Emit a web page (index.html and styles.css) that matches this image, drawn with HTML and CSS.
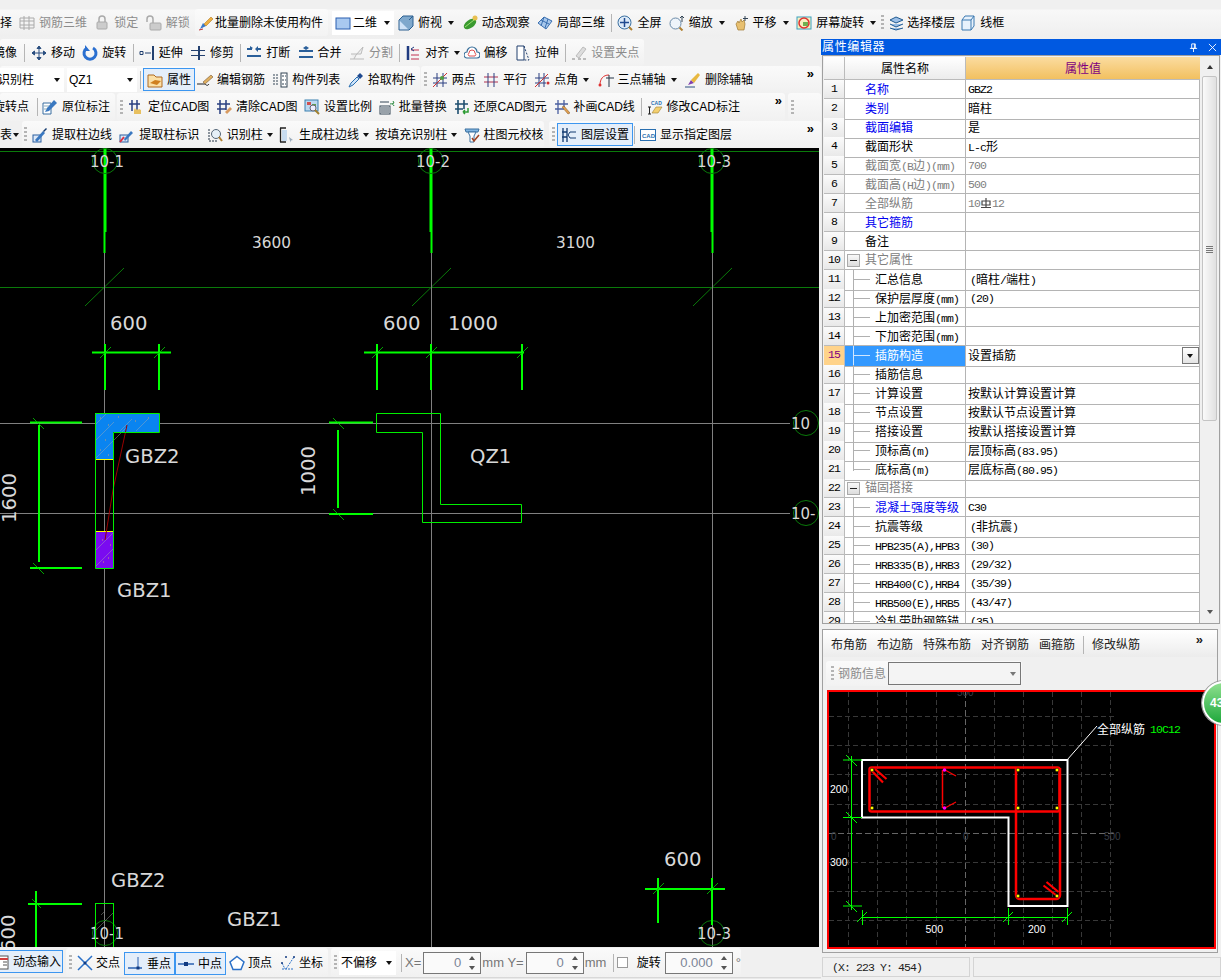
FILE: index.html
```html
<!DOCTYPE html>
<html lang="zh">
<head>
<meta charset="utf-8">
<title>属性编辑器</title>
<link rel="stylesheet" href="styles.css">
</head>
<body>
<div class="app">
  <div class="top">
    <div class="cut" >择</div>
    <div class="it off"><svg class="ic" viewBox="0 0 16 16"><path d="M1 3h14v10H1zM1 6h14M1 10h14M5 1v14M10 1v14" fill="none" stroke="#aaa"/></svg>钢筋三维</div>
    <div class="it off"><svg class="ic" viewBox="0 0 16 16"><rect x="3" y="7" width="10" height="7" rx="1" fill="#ccc" stroke="#aaa"/><path d="M5 7V4a3 3 0 0 1 6 0v3" fill="none" stroke="#aaa" stroke-width="1.5"/></svg>锁定</div>
    <div class="it off"><svg class="ic" viewBox="0 0 16 16"><rect x="4" y="8" width="11" height="7" rx="1" fill="#ccc" stroke="#aaa"/><path d="M1 7V4a3 3 0 0 1 6 0v4" fill="none" stroke="#aaa" stroke-width="1.5"/></svg>解锁</div>
    <div class="grp pill"><div class="it tight last"><svg class="ic" viewBox="0 0 16 16"><path d="M2 14l3-6 3 3z" fill="#3a78c8"/><path d="M6 9l7-7 2 2-7 7z" fill="#f0b040" stroke="#a06a10" stroke-width=".5"/><path d="M1 15l4-1" stroke="#c03030"/></svg>批量删除未使用构件</div></div>
    <div class="sel s2d"><svg class="ic" viewBox="0 0 16 16"><rect x="1" y="3" width="14" height="11" fill="#a9c9f0" stroke="#2a5fb0"/></svg><span class="lbl">二维</span><i class="ar"></i></div>
    <div class="it"><svg class="ic" viewBox="0 0 16 16"><path d="M1 5h10v10H1z" fill="#cfe2f6" stroke="#2a5f90"/><path d="M1 5l4-4h10v10l-4 4M11 5l4-4" fill="#7fa8cc" stroke="#2a5f90"/></svg>俯视<i class="ar"></i></div>
    <div class="it"><svg class="ic" viewBox="0 0 16 16"><ellipse cx="8" cy="9" rx="7" ry="4" transform="rotate(-35 8 9)" fill="#3a9a30"/><circle cx="13" cy="3" r="2.5" fill="#e8c050"/><path d="M3 12l9-7" stroke="#9adf70"/></svg>动态观察</div>
    <div class="it"><svg class="ic" viewBox="0 0 16 16"><path d="M1 8l6-6 8 4-6 8z" fill="#a8c8ec" stroke="#3a6fb0"/><path d="M4 5l8 4M7 2l-3 9M11 4l-3 9" stroke="#3a6fb0" fill="none"/></svg>局部三维</div>
    <i class="sep"></i>
    <div class="it"><svg class="ic" viewBox="0 0 16 16"><circle cx="7.5" cy="7.5" r="6.5" fill="#dceaf8" stroke="#3a6fa0"/><path d="M7.5 3v9M3 7.5h9" stroke="#204a90" stroke-width="1.5"/><path d="M12 12l3 3" stroke="#b08030" stroke-width="2"/></svg>全屏</div>
    <div class="it"><svg class="ic" viewBox="0 0 16 16"><circle cx="6.5" cy="8.5" r="5.5" fill="#eef4fa" stroke="#6a8aa8"/><path d="M10.500 12.500l3 3" stroke="#b08030" stroke-width="2"/><path d="M13 1v6M11 3l2-2 2 2" stroke="#345" fill="none"/></svg>缩放<i class="ar"></i></div>
    <div class="it"><svg class="ic" viewBox="0 0 16 16"><path d="M3 9l2-3 1 2 2-4 1 3 2-2 1 4-1 6H5z" fill="#e8c070" stroke="#a07a30" stroke-width=".7"/><path d="M12 1v5M10 3.500h5" stroke="#345"/></svg>平移<i class="ar"></i></div>
    <div class="it"><svg class="ic" viewBox="0 0 16 16"><rect x="1" y="2" width="14" height="12" fill="#f6f0c0" stroke="#3aa0c0"/><circle cx="8" cy="8" r="5" fill="none" stroke="#e03030" stroke-width="1.5"/><rect x="7" y="7" width="5" height="4" fill="#70b050"/></svg>屏幕旋转<i class="ar"></i></div>
    <i class="grip g-top"></i>
    <div class="it i-floor"><svg class="ic" viewBox="0 0 16 16"><path d="M1 5l6-3 7 3-7 3zM1 9l6 3 7-3M1 13l6 2 7-2" fill="#9cc0e8" stroke="#205a90"/></svg>选择楼层</div>
    <div class="it"><svg class="ic" viewBox="0 0 16 16"><path d="M2 5h9v10H2zM2 5l3-4h9v10l-3 4M11 5l3-4" fill="#e8f2fc" stroke="#3a78b0"/></svg>线框</div>
  </div>

  <div class="main">
    <div class="left">
      <div class="row r2">
        <div class="grp g-first">
          <span class="cut c7">镜像</span><i class="sep s7"></i>
          <div class="it"><svg class="ic" viewBox="0 0 16 16"><path d="M8 1v14M1 8h14M8 1L6 3.500h4zM8 15l-2-2.500h4zM1 8l2.500-2v4zM15 8l-2.500-2v4z" fill="#2a4f80" stroke="#2a4f80"/></svg>移动</div>
          <div class="it"><svg class="ic" viewBox="0 0 16 16"><path d="M5 3a6 6 0 1 0 6 0" fill="none" stroke="#2a6fd0" stroke-width="3"/><path d="M3 0v6h5z" fill="#2a6fd0"/></svg>旋转</div>
          <i class="sep"></i>
          <div class="it"><svg class="ic" viewBox="0 0 16 16"><path d="M1 6.500h3v3H1zM6 8h6" fill="none" stroke="#23406f"/><path d="M14 1v14" stroke="#23406f" stroke-width="2"/></svg>延伸</div>
          <div class="it"><svg class="ic" viewBox="0 0 16 16"><path d="M1 5.500h7M1 10.500h7M10 5.500h5M10 10.500h5" stroke="#23406f"/><path d="M9 1v14" stroke="#23406f" stroke-width="2"/></svg>修剪</div>
          <i class="sep"></i>
          <div class="it"><svg class="ic" viewBox="0 0 16 16"><path d="M1 4h5M10 4h5M1 11h14" stroke="#2a5f9a" stroke-width="2"/><path d="M7 3L4 1v4zM9 4l3-3v6z" fill="#2a5f9a"/></svg>打断</div>
          <div class="it"><svg class="ic" viewBox="0 0 16 16"><path d="M1 6h14M1 12h14" stroke="#2a5f9a" stroke-width="2"/><path d="M5 3l3 2V1zM11 3L8 5V1z" fill="#2a5f9a"/></svg>合并</div>
          <div class="it off"><svg class="ic" viewBox="0 0 16 16"><path d="M1 14h14M2 9h10l2-7-7 8-2 4" fill="#eee" stroke="#bbb"/></svg>分割</div>
          <i class="sep"></i>
          <div class="it"><svg class="ic" viewBox="0 0 16 16"><path d="M3 1v14" stroke="#1f3a80" stroke-width="2.500"/><path d="M6 5h8M6 10h8M6 14h8" stroke="#c03050"/><path d="M9 2L6 4l3 2" fill="none" stroke="#1f3a80"/></svg>对齐<i class="ar"></i></div>
          <div class="it"><svg class="ic" viewBox="0 0 16 16"><path d="M3 13a3 3 0 0 1 0-6 5 5 0 0 1 10 0 3 3 0 0 1 0 6z" fill="#fff" stroke="#3a6f9a" stroke-width="1.200"/><path d="M5 11a2 2 0 0 1 0-3 3 3 0 0 1 6 0 2 2 0 0 1 0 3z" fill="none" stroke="#e05050"/></svg>偏移</div>
          <div class="it"><svg class="ic" viewBox="0 0 16 16"><path d="M2 1h7v14H2z" fill="#fff" stroke="#23406f"/><path d="M9 1l5 14H9" fill="none" stroke="#23406f" stroke-dasharray="2 1.500"/></svg>拉伸</div>
          <i class="sep"></i>
          <div class="it off last"><svg class="ic" viewBox="0 0 16 16"><path d="M5 11l7-9 3 2-7 9z" fill="#ddd" stroke="#bbb"/><path d="M1 14h3M7 14h3M12 14h3" stroke="#bbb" stroke-width="2"/></svg>设置夹点</div>
        </div>
      </div>

      <div class="row r3">
        <div class="grp g-sel">
          <div class="sel s-a"><span class="lbl">识别柱</span><i class="ar"></i></div>
          <div class="sel s-b"><span class="lbl">QZ1</span><i class="ar"></i></div>
          <i class="sep"></i>
          <div class="box"><svg class="ic" viewBox="0 0 16 16"><path d="M1 3h6l2 2h6v10H1z" fill="#fbe0a8" stroke="#b06a20"/><path d="M3 11l5-3 6 1-4 4z" fill="#d08020"/></svg>属性</div>
          <div class="it"><svg class="ic" viewBox="0 0 16 16"><path d="M0 12h7c2 0 3 3 5 0" fill="none" stroke="#222"/><path d="M6 10l8-7 2 2-8 7z" fill="#e0b060" stroke="#604020" stroke-width=".5"/></svg>编辑钢筋</div>
          <div class="it"><svg class="ic" viewBox="0 0 16 16"><rect x="9" y="1" width="6" height="14" fill="#fff" stroke="#345"/><path d="M1 3h5M1 6h5M1 9h5M1 12h5M10 4h4M10 8h4M10 12h4" stroke="#345" stroke-dasharray="2 1"/></svg>构件列表</div>
          <div class="it last"><svg class="ic" viewBox="0 0 16 16"><path d="M1 15l2-4 6-6 2 2-6 6z" fill="#cfe4fa" stroke="#2a6fb0"/><path d="M9 4l3-3 3 3-3 3z" fill="#1f4a90"/></svg>拾取构件</div>
        </div>
        <div class="grp grow">
          <i class="grip"></i>
          <div class="it"><svg class="ic" viewBox="0 0 16 16"><path d="M1 6h14M1 11h14M5 1v14M11 1v14" stroke="#2a3f80"/><path d="M1 15L15 1" stroke="#d03030"/><circle cx="10" cy="6" r="2" fill="#50a040"/></svg>两点</div>
          <div class="it"><svg class="ic" viewBox="0 0 16 16"><path d="M1 5h14M1 10h14" stroke="#b03050"/><path d="M5 1v14M11 1v14" stroke="#2a3f80"/></svg>平行</div>
          <div class="it"><svg class="ic" viewBox="0 0 16 16"><path d="M1 6h14M1 11h11M5 1v14M10 1v14" stroke="#2a3f80"/><path d="M1 15L14 2" stroke="#d03030"/><circle cx="14" cy="11" r="1.500" fill="#d03030"/></svg>点角<i class="ar"></i></div>
          <div class="it"><svg class="ic" viewBox="0 0 16 16"><path d="M2 13c0-6 3-10 9-10" fill="none" stroke="#e03030"/><path d="M8 6h8M11 3v12" stroke="#234"/><circle cx="2" cy="13" r="1.500" fill="#e03030"/></svg>三点辅轴<i class="ar"></i></div>
          <div class="it last"><svg class="ic" viewBox="0 0 16 16"><path d="M0 15h10" stroke="#2a4f80"/><path d="M3 13l3-5 3 3z" fill="#8040b0"/><path d="M6 8l7-7 2 2-6 8z" fill="#e8b840"/></svg>删除辅轴</div>
          <span class="more">»</span>
        </div>
      </div>

      <div class="row r4">
        <div class="grp g-r4a">
          <span class="cut c7">旋转点</span><i class="sep s4"></i>
          <div class="it last"><svg class="ic" viewBox="0 0 16 16"><path d="M1 4h8v11H1z" fill="#fff" stroke="#3a6fa0"/><path d="M3 13l2-4 7-8 3 3-8 8z" fill="#3a78c0"/><path d="M2 7h5M2 10h3" stroke="#8ab"/></svg>原位标注</div>
        </div>
        <div class="grp g-cad">
          <i class="grip"></i>
          <div class="it"><svg class="ic" viewBox="0 0 16 16"><path d="M1 5h11M4 1v11M9 1v11" stroke="#2a3f80" stroke-width="1.500"/><path d="M6 15v-4l1-2 1 2 1-1 1 1 1-1 2 1v4z" fill="#e8c060"/></svg>定位CAD图</div>
          <div class="it"><svg class="ic" viewBox="0 0 16 16"><path d="M1 5h13M1 10h9M4 1v14M10 1v10" stroke="#2a3f80" stroke-width="1.500"/><path d="M9 13l5-5 2 2-5 5z" fill="#d89a60"/></svg>清除CAD图</div>
          <div class="it"><svg class="ic" viewBox="0 0 16 16"><rect x="1" y="1" width="13" height="11" fill="#bcd8f0" stroke="#3a80b0"/><rect x="3" y="3" width="4" height="3" fill="#d05050"/><rect x="8" y="5" width="4" height="5" fill="#60a050"/><circle cx="9" cy="9" r="3" fill="#eef" stroke="#667"/><path d="M11 11l4 4" stroke="#a08030" stroke-width="2"/></svg>设置比例</div>
          <div class="it"><svg class="ic" viewBox="0 0 16 16"><rect x="1" y="7" width="10" height="8" fill="#fff" stroke="#345"/><path d="M3 8v6M5 8v6M7 8v6M9 8v6M1 3h9" stroke="#345"/><path d="M11 5a3 3 0 0 1 4 2M14 2l1 2-2 1" fill="none" stroke="#2a8a40"/></svg>批量替换</div>
          <div class="it"><svg class="ic" viewBox="0 0 16 16"><path d="M1 5h13M1 10h8M4 1v14M10 1v9" stroke="#1f4f70" stroke-width="1.600"/><path d="M14 9v4h-5M9 13l2-2M9 13l2 2" fill="none" stroke="#2a9a30" stroke-width="1.500"/></svg>还原CAD图元</div>
          <div class="it"><svg class="ic" viewBox="0 0 16 16"><path d="M1 5h13M1 10h9M4 1v14M10 1v9" stroke="#4a5fa0" stroke-width="1.300"/><path d="M8 8l2-1 6 7-2 1z" fill="#e0a050" stroke="#805020" stroke-width=".5"/></svg>补画CAD线</div>
          <i class="sep"></i>
          <div class="it"><svg class="ic" viewBox="0 0 16 16"><text x="4" y="6" class="ict">CAD</text><path d="M1 8h3M2.500 8v7M1 15h3" stroke="#222"/><path d="M5 14l4-6h6l-4 6z" fill="#f4d070" stroke="#a08030" stroke-width=".6"/></svg>修改CAD标注</div>
          <span class="more">»</span>
        </div>
        <div class="grp grow g-tail"><i class="grip"></i></div>
      </div>

      <div class="row r5">
        <span class="cut">表</span><i class="ar ar-t"></i>
        <div class="grp g-r5b">
          <i class="grip"></i>
          <div class="it"><svg class="ic" viewBox="0 0 16 16"><rect x="1" y="8" width="8" height="7" fill="#dce8f8" stroke="#2a5fa0"/><path d="M3 13l8-9 2 2-8 9z" fill="#3a78c0"/><path d="M11 4l3-3 1 1-3 3z" fill="#123a70"/></svg>提取柱边线</div>
          <div class="it"><svg class="ic" viewBox="0 0 16 16"><rect x="1" y="8" width="8" height="7" fill="#dce8f8" stroke="#2a5fa0"/><path d="M1 15l4-5" stroke="#e03040" stroke-width="2"/><path d="M5 12l7-8 2 2-8 8z" fill="#3a78c0"/></svg>提取柱标识</div>
          <div class="it"><svg class="ic" viewBox="0 0 16 16"><path d="M2 2v12h8" fill="none" stroke="#234" stroke-dasharray="2 1"/><circle cx="9" cy="7" r="4.500" fill="#e6f0f8" stroke="#567"/><path d="M12 10l3 4" stroke="#b08030" stroke-width="2"/></svg>识别柱<i class="ar"></i></div>
          <div class="it"><svg class="ic" viewBox="0 0 16 16"><path d="M1.500 1v14M1 1h6M1 15h6" stroke="#222" stroke-width="1.300"/><path d="M3 3h5v11H3z" fill="#c8dcf0"/><path d="M10 10l4 3-2 .5-.5 2z" fill="#9ab"/></svg>生成柱边线<i class="ar"></i></div>
          <div class="it no-ic">按填充识别柱<i class="ar"></i></div>
          <div class="it last"><svg class="ic" viewBox="0 0 16 16"><path d="M1 2h14l-1 3H2z" fill="#80b4e0" stroke="#3a70a0"/><path d="M4 5h8l-2 4v6H6V9z" fill="#fff" stroke="#3a70a0"/><path d="M8 11l2 3 5-6" fill="none" stroke="#a04020" stroke-width="1.500"/></svg>柱图元校核</div>
        </div>
        <div class="grp grow g-r5c">
          <i class="grip"></i>
          <div class="box"><svg class="ic" viewBox="0 0 16 16"><path d="M2 1v14M1 5h5M1 10h5M6 1v14" stroke="#123a70" stroke-width="1.300"/><path d="M15 5H9l-2 3 2 3h6" fill="none" stroke="#123a70"/></svg>图层设置</div>
          <i class="sep"></i>
          <div class="it"><svg class="ic" viewBox="0 0 16 16"><rect x=".5" y="2.500" width="15" height="11" fill="#fff" stroke="#2a6fb0"/><text x="2" y="10.500" class="ict2">CAD</text></svg>显示指定图层</div>
          <span class="more">»</span>
        </div>
      </div>

      <div class="canvas">
        <svg class="cad" viewBox="0 148 819 799" width="819" height="799">
          <rect x="0" y="148" width="819" height="799" fill="#000"/>
          <path class="dk" d="M0 151.500H819M0 287.500H819"/>
          <path class="dk" d="M85 306l39-38M412 306l39-38M693 306l39-38"/>
          <path class="gy" d="M104.500 253V947M431.500 253V947M712.500 253V947M0 423.500H790M0 513.500H790"/>
          <path class="g3" d="M105 148V232M431 148V232M712 148V232"/>
          <path class="g2" d="M104.500 232V253M431.500 232V253M712.500 232V253"/>
          <g class="dk">
            <circle cx="105" cy="161" r="12.500"/><circle cx="431" cy="161" r="12.500"/><circle cx="712" cy="161" r="12.500"/>
            <circle cx="806" cy="423" r="12.500"/><circle cx="806" cy="513" r="12.500"/>
            <circle cx="105" cy="933" r="12.500"/><circle cx="712" cy="933" r="12.500"/>
          </g>
          <text class="ax" x="90" y="167">10-1</text>
          <text class="ax" x="416" y="167">10-2</text>
          <text class="ax" x="697" y="167">10-3</text>
          <text class="ax" x="791" y="429">10</text>
          <text class="ax" x="791" y="519">10-</text>
          <text class="ax" x="90" y="939">10-1</text>
          <text class="ax" x="697" y="939">10-3</text>
          <text class="d15" x="252" y="248">3600</text>
          <text class="d15" x="556" y="248">3100</text>
          <text class="d20" x="110" y="330">600</text>
          <text class="d20" x="383" y="330">600</text>
          <text class="d20" x="448" y="330">1000</text>
          <text class="d20" x="664" y="866">600</text>
          <text class="d20" x="125" y="463">GBZ2</text>
          <text class="d20" x="117" y="597">GBZ1</text>
          <text class="d20" x="470" y="463">QZ1</text>
          <text class="d20" x="111" y="887">GBZ2</text>
          <text class="d20" x="227" y="926">GBZ1</text>
          <text class="d20" transform="translate(16 523) rotate(-90)">1600</text>
          <text class="d20" transform="translate(315 496) rotate(-90)">1000</text>
          <text class="d20" transform="translate(15 952) rotate(-90)">600</text>
          <path class="g2" d="M92 352.500H171M105 344V390M159 344V390M364 352.500H524M377 344V390M431 344V390M522 344V390"/>
          <path class="g2" d="M30 422.500H82M39 425V562M30 568H82M329 422.500H373M338 430V508M329 514H373"/>
          <path class="g2" d="M28 904H82M36 891V947M645 889H725M658 878V923M712 878V925"/>
          <path class="tick" d="M100 358l11-11M154 358l11-11M372 358l11-11M426 358l11-11M517 358l11-11M33 418l11 11M33 563l11 11M333 418l11 11M333 509l11 11M32 899l9 9M653 894l11-11M707 894l11-11"/>
          <path d="M95 413H159V432H113V459H95z" fill="#0a84f0"/>
          <rect x="95" y="531" width="18" height="37" fill="#7a0bf0"/>
          <path class="hatch" d="M96 440l18-18M96 458l30-30M120 431l12-12M136 431l12-12M96 424l10-10M96 550l17-17M96 566l17-17"/>
          <path class="dots" d="M100 418h1M108 425h1M118 417h1M135 421h1M148 418h1M105 440h1M100 450h1M108 455h1M102 540h1M108 558h1M103 562h1M110 545h1"/>
          <path d="M95 459.500H113M95 531.500H113" stroke="#ff0" fill="none"/>
          <path d="M127 425L113 490L105 540" stroke="#900" fill="none"/>
          <path class="g1" d="M95.500 413.500H159.500V432.500H113.500V568.500H95.500zM376.500 413.500H440.500V504.500H521.500V522.500H422.500V432.500H376.500z"/>
          <rect class="g1" x="95.500" y="903.500" width="18" height="44"/>
          <path class="hatch" d="M96 930l17-17M104 912l-3 3"/>
        </svg>
      </div>

      <div class="bar">
        <div class="box box-dyn"><svg class="ic" viewBox="0 0 16 16"><rect x="1" y="2" width="14" height="13" fill="#fff" stroke="#555"/><path d="M1 5h14" stroke="#d04040" stroke-width="2"/><path d="M10 8h4M10 11h4" stroke="#555"/></svg>动态输入</div>
        <div class="grp g-snap">
          <i class="grip"></i>
          <div class="it gap3 it-x"><svg class="ic" viewBox="0 0 16 16"><path d="M1 1l14 14M15 1L1 15" stroke="#2a70c8" stroke-width="1.500"/><circle cx="8" cy="8" r="1.500" fill="#123a80"/></svg>交点</div>
          <div class="box box-snap"><svg class="ic" viewBox="0 0 16 16"><path d="M1 12h14" stroke="#2a60b0" stroke-width="1.500"/><path d="M11 1v11" stroke="#2a60b0"/><rect x="9.500" y="10.500" width="3" height="3" fill="#123a80"/></svg>垂点</div>
          <div class="box box-snap"><svg class="ic" viewBox="0 0 16 16"><path d="M0 8h16" stroke="#2a60b0" stroke-width="1.500"/><rect x="6" y="6" width="4" height="4" fill="#123a80"/></svg>中点</div>
          <div class="it gap3 it-p"><svg class="ic" viewBox="0 0 16 16"><path d="M8 1.500L15 7l-3 7.500H4L1 7z" fill="#fff" stroke="#2a70c8" stroke-width="1.500"/></svg>顶点</div>
          <div class="it gap3 last"><svg class="ic" viewBox="0 0 16 16"><path d="M2 8l3 6M6 14l8-12M2 14h12" fill="none" stroke="#2a70c8" stroke-dasharray="2 1"/><circle cx="2" cy="8" r="1" fill="#123a80"/><circle cx="6" cy="2" r="1" fill="#123a80"/><circle cx="14" cy="2" r="1" fill="#123a80"/></svg>坐标</div>
        </div>
        <div class="grp g-coord">
          <i class="grip g-c"></i>
          <div class="sel s-off"><span class="lbl">不偏移</span><i class="ar"></i></div>
          <i class="sep s-c"></i>
          <span class="mut m-x">X=</span>
          <div class="num-in w58"><span>0</span><i class="spin"></i></div>
          <span class="mut m-mm">mm</span>
          <span class="mut m-y">Y=</span>
          <div class="num-in w58"><span>0</span><i class="spin"></i></div>
          <span class="mut m-mm">mm</span>
          <i class="sep s-c2"></i>
          <i class="chk"></i>
          <span class="rot">旋转</span>
          <div class="num-in w68"><span>0.000</span><i class="spin"></i></div>
          <span class="mut deg">°</span>
        </div>
      </div>
    </div>

    <div class="side">
      <div class="title"><span>属性编辑器</span><span class="t-btns"><svg class="tb" viewBox="0 0 10 10"><path d="M3 1h4v5H3zM1 6h8M5 6v4M6 1v5" fill="none" stroke="#fff"/></svg><svg class="tb" viewBox="0 0 10 10"><path d="M1 1l8 8M9 1L1 9" stroke="#fff"/></svg></span></div>
      <div class="gridbox">
        <div class="gridscroll">
          <div class="phead"><div class="ph-n"></div><div class="ph-a">属性名称</div><div class="ph-b">属性值</div></div>
          <div class="pr"><div class="n">1</div><div class="a blue">名称</div><div class="v"><span class="l">GBZ2</span></div></div>
          <div class="pr"><div class="n">2</div><div class="a blue">类别</div><div class="v">暗柱</div></div>
          <div class="pr"><div class="n">3</div><div class="a blue">截面编辑</div><div class="v">是</div></div>
          <div class="pr"><div class="n">4</div><div class="a">截面形状</div><div class="v"><span class="l">L-c</span>形</div></div>
          <div class="pr"><div class="n">5</div><div class="a gray">截面宽<span class="l">(B</span>边<span class="l">)(mm)</span></div><div class="v gray"><span class="l">700</span></div></div>
          <div class="pr"><div class="n">6</div><div class="a gray">截面高<span class="l">(H</span>边<span class="l">)(mm)</span></div><div class="v gray"><span class="l">500</span></div></div>
          <div class="pr"><div class="n">7</div><div class="a gray">全部纵筋</div><div class="v gray"><span class="l">10</span><svg class="bar-sym" viewBox="0 0 10 10"><path d="M5 0v9M0 9.500h10M1 3h8v4H1z" fill="none" stroke="#333" stroke-width="1.200"/></svg><span class="l">12</span></div></div>
          <div class="pr"><div class="n">8</div><div class="a blue">其它箍筋</div><div class="v"></div></div>
          <div class="pr"><div class="n">9</div><div class="a">备注</div><div class="v"></div></div>
          <div class="pr"><div class="n">10</div><div class="a gray g"><i class="exp"></i>其它属性</div><div class="v"></div></div>
          <div class="pr"><div class="n">11</div><div class="a t">汇总信息</div><div class="v p"><span class="l">(</span>暗柱<span class="l">/</span>端柱<span class="l">)</span></div></div>
          <div class="pr"><div class="n">12</div><div class="a t">保护层厚度<span class="l">(mm)</span></div><div class="v p"><span class="l">(20)</span></div></div>
          <div class="pr"><div class="n">13</div><div class="a t">上加密范围<span class="l">(mm)</span></div><div class="v"></div></div>
          <div class="pr"><div class="n">14</div><div class="a t">下加密范围<span class="l">(mm)</span></div><div class="v"></div></div>
          <div class="pr sel-r"><div class="n">15</div><div class="a t">插筋构造</div><div class="v">设置插筋<i class="dd"></i></div></div>
          <div class="pr"><div class="n">16</div><div class="a t">插筋信息</div><div class="v"></div></div>
          <div class="pr"><div class="n">17</div><div class="a t">计算设置</div><div class="v">按默认计算设置计算</div></div>
          <div class="pr"><div class="n">18</div><div class="a t">节点设置</div><div class="v">按默认节点设置计算</div></div>
          <div class="pr"><div class="n">19</div><div class="a t">搭接设置</div><div class="v">按默认搭接设置计算</div></div>
          <div class="pr"><div class="n">20</div><div class="a t">顶标高<span class="l">(m)</span></div><div class="v">层顶标高<span class="l">(83.95)</span></div></div>
          <div class="pr"><div class="n">21</div><div class="a t end">底标高<span class="l">(m)</span></div><div class="v">层底标高<span class="l">(80.95)</span></div></div>
          <div class="pr"><div class="n">22</div><div class="a gray g"><i class="exp"></i>锚固搭接</div><div class="v"></div></div>
          <div class="pr"><div class="n">23</div><div class="a t blue">混凝土强度等级</div><div class="v"><span class="l">C30</span></div></div>
          <div class="pr"><div class="n">24</div><div class="a t">抗震等级</div><div class="v p"><span class="l">(</span>非抗震<span class="l">)</span></div></div>
          <div class="pr"><div class="n">25</div><div class="a t"><span class="l">HPB235(A),HPB3</span></div><div class="v p"><span class="l">(30)</span></div></div>
          <div class="pr"><div class="n">26</div><div class="a t"><span class="l">HRB335(B),HRB3</span></div><div class="v p"><span class="l">(29/32)</span></div></div>
          <div class="pr"><div class="n">27</div><div class="a t"><span class="l">HRB400(C),HRB4</span></div><div class="v p"><span class="l">(35/39)</span></div></div>
          <div class="pr"><div class="n">28</div><div class="a t"><span class="l">HRB500(E),HRB5</span></div><div class="v p"><span class="l">(43/47)</span></div></div>
          <div class="pr"><div class="n">29</div><div class="a t">冷轧带肋钢筋锚</div><div class="v p"><span class="l">(35)</span></div></div>
        </div>
        <div class="vscroll"><i class="up"></i><div class="thumb"><i class="thumb-grip"></i></div><i class="down"></i></div>
      </div>

      <div class="sec">
        <div class="sec-tb">
          <span>布角筋</span><span>布边筋</span><span>特殊布筋</span><span>对齐钢筋</span><span>画箍筋</span><i class="sep"></i><span>修改纵筋</span><span class="more">»</span>
        </div>
        <div class="sec-row">
          <i class="grip"></i><span class="off">钢筋信息</span>
          <div class="combo"><i class="ar"></i></div>
        </div>
        <div class="sec-cv">
          <svg viewBox="829 693 385 255" width="385" height="255">
            <rect x="829" y="693" width="385" height="255" fill="#000"/>
            <path class="gd" d="M848.500 693V948M877.500 693V948M906.500 693V948M936.500 693V948M994.500 693V948M1023.500 693V948M1052.500 693V948M1081.500 693V948M1110.500 693V948M829 717.500H1116M829 746.500H1116M829 775.500H1116M829 805.500H1116M829 863.500H1116M829 892.500H1116M829 921.500H1116"/>
            <path class="gc" d="M965.500 693V948M829 834.500H1116"/>
            <text class="dim" x="831" y="841">0</text><text class="dim" x="963" y="841">0</text><text class="dim" x="1104" y="841">500</text><text class="dim" x="957" y="697">500</text>
            <path d="M862 761H1067.500V907H1008.500V818.500H862z" fill="none" stroke="#fff" stroke-width="2"/>
            <path d="M1067 761L1097 727" stroke="#fff" fill="none"/>
            <text class="wh12" x="1097" y="735">全部纵筋</text>
            <text class="gr10" x="1150" y="734">10C12</text>
            <g fill="none" stroke="#f00">
              <rect x="869.500" y="768.500" width="190" height="44" rx="2" stroke-width="2.500"/>
              <path d="M1016 769V896a4 4 0 0 0 4 4H1056a4 4 0 0 0 4-4V769" stroke-width="2.500"/>
              <path d="M942.500 771V809" stroke-width="1.500"/>
              <path d="M945 771L956 777M945 809L956 803" stroke-width="1.200"/>
              <path d="M870.500 770.500L883 783.500M875 770L886.500 780M1056.500 896.500L1043.500 886.500M1058.500 893L1046.500 883" stroke-width="2.200"/>
            </g>
            <g fill="#ff0" stroke="#000" stroke-width=".5">
              <circle cx="872" cy="771" r="1.800"/><circle cx="872" cy="809" r="1.800"/><circle cx="1018" cy="771" r="1.800"/><circle cx="1018" cy="809" r="1.800"/><circle cx="1057" cy="771" r="1.800"/><circle cx="1057" cy="809" r="1.800"/><circle cx="1018" cy="897" r="1.800"/><circle cx="1057" cy="897" r="1.800"/>
            </g>
            <circle cx="944.500" cy="771" r="1.800" fill="#f0f"/><circle cx="944.500" cy="809" r="1.800" fill="#f0f"/>
            <path class="gl" d="M851.500 757V911M843 761H862M843 818.500H862M843 907H862M862 918.500H1067M862.500 911V926M1008.500 909V926M1067.500 909V926M846 756l11 11M846 813l11 11M846 902l11 11M857 923l10-10M1003 923l10-10M1062 923l10-10"/>
            <text class="wh" x="830" y="794">200</text>
            <text class="wh" x="830" y="867">300</text>
            <text class="wh" x="925.500" y="934">500</text>
            <text class="wh" x="1028" y="934">200</text>
          </svg>
        </div>
      </div>
      <div class="status"><div class="st st-a"><span class="l">(X: 223 Y: 454)</span></div><div class="st st-b"></div></div>
      <div class="badge">43</div>
    </div>
  </div>
</div>
</body>
</html>
```

FILE: styles.css
```css
* { box-sizing: border-box; }
html, body { margin: 0; padding: 0; background: #f0f0f0; }
body {
  width: 1221px; height: 980px; overflow: hidden;
  font: 12px/1 "Liberation Sans", "Noto Sans CJK SC", sans-serif;
  color: #000;
}
i { display: block; flex: none; }
.app { width: 1221px; height: 980px; display: flex; flex-direction: column; overflow: hidden; background: #f0f0f0; }

/* toolbars */
.top { height: 39px; flex: none; padding: 9px 0 3px; display: flex; align-items: center; white-space: nowrap; background: linear-gradient(#f0f0f0 9px, #f8f8f8 10px, #efefef 36px, #f0f0f0); }
.main { flex: 1; display: flex; min-height: 0; }
.left { width: 821px; flex: none; display: flex; flex-direction: column; overflow: hidden; }
.row { flex: none; height: 27px; display: flex; align-items: center; overflow: hidden; white-space: nowrap; background: #f0f0f0; }
.r4 { height: 28px; }
.grp { height: 100%; display: flex; align-items: center; border-radius: 3px; background: linear-gradient(#fafafa, #f1f1f1); padding: 0 3px; flex: none; position: relative; }
.grow { flex: 1; }
.g-first { margin-left: 0; padding: 0 5px 0 0; }
.g-sel { padding: 0 4px 0 0; }
.g-sel + .grp { margin-left: 1px; }
.g-r4a { padding: 0 5px 0 0; }
.g-cad { width: 668px; margin-left: 2px; }
.g-tail { margin-left: 3px; }
.g-r5b { width: 522px; margin-left: 3px; padding-left: 2px; }
.g-r5c { margin-left: 5px; }
.pill { margin-left: -2px; padding: 0 5px 0 3px; height: 27px; background: linear-gradient(#fbfbfb, #f3f3f3); }
.cut { flex: none; margin-right: 7px; }
.r5 .cut { margin-right: 0; }
.c7 { margin-left: -7px; margin-right: 0; }
.it { display: flex; align-items: center; gap: 4px; margin-right: 7.3px; flex: none; }
.r4 .it { margin-right: 6.7px; }
.it.last, .r4 .it.last { margin-right: 0; }
.it.tight { gap: 1px; }
.off { color: #8c8c8c; }
.ic { width: 16px; height: 16px; flex: none; }
.ict { font: 700 5px "Liberation Sans", sans-serif; fill: #2a6fb0; }
.ict2 { font: 700 6px "Liberation Sans", sans-serif; fill: #2a6fb0; }
.sep { width: 1px; height: 18px; background: #b5b5b5; margin: 0 5px 0 -1px; }
.s7 { margin: 0 6px 0 7px; }
.s4 { margin: 0 4px 0 8px; }
.grip { width: 3px; height: 15px; margin-right: 5px; background: repeating-linear-gradient(#b4b4b4 0 2px, transparent 2px 4px); }
.g-top { margin-left: -3px; }
.it.i-floor { margin-right: 5px; gap: 2px; }
.ar { width: 0; height: 0; border: solid transparent; border-width: 4px 3.5px 0; border-top-color: #111; margin-left: 1px; }
.top .it .ar { margin: 0 .5px 0 2px; }
.r2 .ar { margin: 0 -4px 0 1px; }
.r3 .it .ar { margin: 0 1px 0 1px; }
.r5 .ar { margin: 0 -1px 0 0; }
.r5 .ar-t { margin: 0 0 0 1px; }
.sel { display: flex; align-items: center; height: 24px; background: #fff; flex: none; position: relative; }
.sel .ar { position: absolute; right: 4px; top: 10px; margin: 0; }
.s2d { width: 62px; padding-left: 3px; margin: 0 4px 0 4px; }
.s2d .lbl { margin-left: 2px; }
.s-a { width: 64px; margin-left: 0; }
.s-a .lbl { margin-left: -2px; }
.s-b { width: 70px; margin-left: 3px; margin-right: 4px; padding-left: 2px; }
.s-a .ar, .s-b .ar { top: 10px; }
.box { display: flex; align-items: center; gap: 4px; height: 23px; padding: 0 3px; border: 1px solid #3c96f0; background: #e4eefa; flex: none; margin: 0 2px 0 -3px; }
.more { margin-left: auto; align-self: flex-start; margin-top: 2px; margin-right: 4px; font-size: 13px; font-weight: 700; line-height: 12px; }
.r4 .more { margin-right: 0; }

/* canvas */
.canvas { height: 799px; flex: none; width: 819px; background: #000; }
.cad { display: block; font-family: "DejaVu Sans", sans-serif; }
.dk { fill: none; stroke: #0a7a0a; }
.gy { fill: none; stroke: #808080; }
.g3 { fill: none; stroke: #00ff00; stroke-width: 3; }
.g2 { fill: none; stroke: #00ff00; stroke-width: 2; }
.g1 { fill: none; stroke: #00f000; }
.tick { fill: none; stroke: #00d000; stroke-width: .8; }
.hatch { fill: none; stroke: #b0b0b0; stroke-width: .6; opacity: .7; }
.dots { fill: none; stroke: #c8a070; }
.ax { font-size: 15px; fill: #d8d8d8; }
.d15 { font-size: 15.3px; fill: #d8d8d8; }
.d20 { font-size: 19.6px; fill: #d8d8d8; }

/* bottom */
.bar { flex: none; height: 33px; padding-top: 1px; display: flex; align-items: flex-start; overflow: hidden; white-space: nowrap; background: linear-gradient(#f0f0f0 30px, #d8d8d8 30px, #d8d8d8 31px, #f8f8f8 32px); }
.bar .box { height: 23px; margin-top: 2px; }
.bar .box-dyn { margin: 2px 0 0 -11px; width: 74px; padding: 0 3px; flex: none; }
.g-snap { height: 29px; margin-left: 3px; width: 262px; padding: 0 0 0 3px; }
.bar .box-snap { width: 51px; margin: 2px 0 0; padding: 0 2px; }
.it.gap3 { gap: 3px; }
.it.it-x { margin-right: 4px; }
.it.it-p { margin: 0 8px 0 3px; }
.g-coord { height: 29px; margin-left: 3px; width: 410px; padding: 0 0 0 3px; }
.g-c { margin-right: 2px; }
.s-off { width: 57px; height: 24px; padding-left: 2px; }
.s-c { margin: 0 3px 0 5px; height: 18px; }
.s-c2 { margin: 0 3px 0 5px; height: 18px; }
.mut { color: #767676; font-size: 13px; }
.m-x { width: 19px; }
.m-mm { width: 25px; padding-left: 1px; }
.m-y { width: 19px; margin-left: 2px; }
.num-in { height: 22px; border: 1px solid #777; background: #fafafa; display: flex; align-items: center; justify-content: flex-end; padding-right: 19px; color: #7a8496; font-size: 13px; position: relative; flex: none; }
.w58 { width: 58px; margin-right: 0; }
.w68 { width: 68px; }
.spin { position: absolute; right: 4px; top: 3px; width: 7px; height: 14px; }
.spin::before, .spin::after { content: ""; position: absolute; left: 0; border: solid transparent; border-width: 0 3.5px; }
.spin::before { top: 0; border-bottom: 4px solid #555; }
.spin::after { bottom: 0; border-top: 4px solid #555; }
.chk { width: 11px; height: 11px; border: 1px solid #9a9a9a; background: #fff; margin-right: 9px; }
.rot { width: 24px; margin-right: 4px; }
.deg { margin-left: 3px; }

/* right panel */
.side { width: 400px; flex: none; position: relative; display: flex; flex-direction: column; overflow: hidden; }
.title { height: 16px; background: #0059e1; color: #fff; font-size: 12px; letter-spacing: .65px; display: flex; align-items: center; justify-content: space-between; padding: 0 4px 0 1px; flex: none; }
.t-btns { display: flex; gap: 10px; }
.tb { width: 9px; height: 9px; }
.gridbox { height: 569px; width: 398px; margin-left: 1px; border: 1px solid #a0a0a0; display: flex; padding: 1px 1px 0; flex: none; overflow: hidden; background: #f0f0f0; }
.gridscroll { width: 376px; flex: none; height: 566px; overflow: hidden; background: #fff; }
.phead { display: grid; grid-template-columns: 21px 121px 1fr; height: 23px; }
.ph-n, .ph-a { background: linear-gradient(#fff, #ececec); border-right: 1px solid #bbb; border-bottom: 1px solid #bbb; }
.ph-a, .ph-b { display: flex; align-items: center; justify-content: center; padding-top: 1px; }
.ph-b { background: linear-gradient(#fbdca0, #f2c060); color: #800080; border-bottom: 1px solid #bbb; }
.pr { display: grid; grid-template-columns: 21px 121px 1fr; height: 19px; line-height: 20px; white-space: nowrap; }
.n { background: linear-gradient(#fbfbfb, #e8e8e8); border-right: 1px solid #bbb; border-bottom: 1px solid #bbb; text-align: center; font: 11.5px/18px "Liberation Mono", monospace; letter-spacing: -.9px; }
.a { border-right: 1px solid #b4b4b4; border-bottom: 1px solid #b4b4b4; padding-left: 20px; position: relative; overflow: hidden; }
.v { border-bottom: 1px solid #b4b4b4; border-right: 1px solid #b4b4b4; padding: 0 0 0 2px; display: flex; align-items: center; position: relative; }
.p { padding-left: 4px; }
.l { font: 11.5px "Liberation Mono", monospace; letter-spacing: -.9px; }
.blue { color: #0000f0; }
.gray { color: #808080; }
.g { padding-left: 2px; display: flex; align-items: center; gap: 5px; }
.exp { width: 13px; height: 13px; border: 1px solid #aaa; background: linear-gradient(#f8f8f8, #ddd); position: relative; }
.exp::after { content: ""; position: absolute; left: 2px; right: 2px; top: 5px; height: 1px; background: #222; }
.t { padding-left: 30px; }
.t::before { content: ""; position: absolute; left: 8px; top: 0; bottom: 0; width: 1px; background: #b0b0b0; }
.t::after { content: ""; position: absolute; left: 9px; top: 9px; width: 16px; height: 1px; background: #b0b0b0; }
.t.end::before { bottom: 9px; }
.sel-r .n { background: #ffd38a; color: #800080; }
.sel-r .a { background: #3399ff; color: #fff; }
.sel-r .a::before, .sel-r .a::after { background: #cfe6ff; }
.dd { position: absolute; right: 0; top: 1px; width: 17px; height: 17px; border: 1px solid #777; background: linear-gradient(#fff, #e4e4e4); }
.dd::after { content: ""; position: absolute; left: 4px; top: 6px; border: solid transparent; border-width: 4px 3.5px 0; border-top-color: #111; }
.bar-sym { width: 10px; height: 10px; margin: 0 1px; opacity: .9; }
.vscroll { flex: 1; position: relative; background: #f0f0f0; margin-left: 1px; }
.up, .down { position: absolute; left: 6px; border: solid transparent; border-width: 0 3.5px; }
.up { top: 8px; border-bottom: 4px solid #333; }
.down { bottom: 9px; border-top: 4px solid #555; }
.thumb { position: absolute; left: 1px; width: 15px; top: 19px; height: 345px; border: 1px solid #c4c4c4; border-radius: 2px; background: linear-gradient(to right, #fafafa, #e0e0e0); }
.thumb-grip { position: absolute; left: 3px; right: 3px; top: 169px; height: 7px; background: repeating-linear-gradient(#777 0 1px, transparent 1px 2px); }

.sec { width: 396px; height: 324px; margin: 5px 0 0 1px; border: 1px solid #a0a0a0; flex: none; display: flex; flex-direction: column; background: #f0f0f0; }
.sec-tb { height: 27px; flex: none; display: flex; align-items: center; gap: 10px; padding: 2px 0 0 8px; background: linear-gradient(#fff, #ececec); color: #222; white-space: nowrap; }
.sec-tb .sep { margin: 0 -2px; }
.sec-tb .more { margin-top: 2px; margin-right: 14px; }
.sec-row { height: 25px; width: 196px; margin: 4px 0 0 3px; padding-left: 5px; display: flex; align-items: center; flex: none; border-radius: 3px; background: linear-gradient(#fafafa, #f2f2f2); }
.sec-row .grip { margin-right: 4px; }
.combo { width: 133px; height: 23px; border: 1px solid #777; margin-left: 2px; background: #f4f4f4; position: relative; }
.combo .ar { position: absolute; right: 4px; top: 9px; margin: 0; border-top-color: #777; }
.sec-cv { width: 389px; height: 259px; margin: 4px 0 0 4px; border: 2px solid #f00; background: #000; flex: none; }
.sec-cv svg { display: block; font-family: "Liberation Sans", sans-serif; }
.gd { fill: none; stroke: #383838; stroke-dasharray: 5 3; }
.gc { fill: none; stroke: #666; stroke-dasharray: 6 3; }
.gl { fill: none; stroke: #00ff00; }
.dim { font-size: 10px; fill: #3a3f48; }
.wh { font-size: 10.5px; fill: #fff; }
.wh12 { font: 12px "Liberation Sans", "Noto Sans CJK SC", sans-serif; fill: #fff; }
.gr10 { font: 11.5px "Liberation Mono", monospace; letter-spacing: -.9px; fill: #0f0; }
.status { display: flex; gap: 3px; height: 20px; margin: 4px 0 0 1px; flex: none; }
.st { border: 1px solid #d4d4d4; background: #f0f0f0; display: flex; align-items: center; padding-left: 9px; color: #222; }
.st-a { width: 148px; }
.st-b { flex: 1; }
.badge { position: absolute; left: 381px; top: 642px; width: 44px; height: 44px; border-radius: 50%; background: linear-gradient(#8fe08f, #1fa83c); border: 2px solid #fff; box-shadow: 0 0 0 1px #9a9a9a; color: #fff; font-weight: 700; font-size: 12px; line-height: 40px; padding-left: 6px; }
```
